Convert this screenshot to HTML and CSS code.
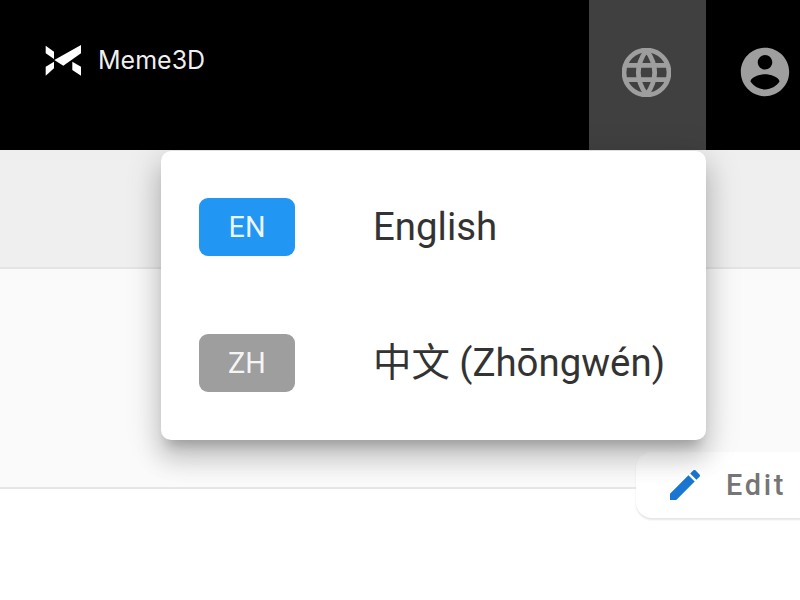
FILE: index.html
```html
<!DOCTYPE html>
<html lang="en">
<head>
<meta charset="utf-8">
<title>Meme3D</title>
<link rel="stylesheet" href="styles.css">
</head>
<body>
<div class="page">
  <header class="header">
    <div class="brand">
      <svg class="logo" viewBox="0 0 36 31" aria-hidden="true">
        <path d="M.7.7L9 6.7V14L.7 8.3Z"/><path d="M.7 30.7V21.7L9 16.7V23.3Z"/>
        <path d="M36 0V8.3L18.3 20.7L9.3 15Z"/><path d="M27.3 16.7L36 21.7V30.7L27.3 25Z"/>
      </svg>
      <span class="brand-name">Meme3D</span>
    </div>
    <div class="actions">
      <button class="action action-active" aria-label="Language">
        <svg class="globe" viewBox="0 0 48 48" aria-hidden="true">
          <circle cx="24" cy="24" r="22"/>
          <path d="M24 2Q8 24 24 46Q40 24 24 2Z"/>
          <path d="M4 17H44M4 31H44"/>
        </svg>
      </button>
      <button class="action" aria-label="Account">
        <svg class="account" viewBox="0 0 24 24" aria-hidden="true">
          <path d="M12 2C6.48 2 2 6.48 2 12s4.48 10 10 10 10-4.48 10-10S17.52 2 12 2zm0 3c1.66 0 3 1.34 3 3s-1.34 3-3 3-3-1.34-3-3 1.34-3 3-3zm0 14.2c-2.5 0-4.71-1.28-6-3.22.03-1.99 4-3.08 6-3.08 1.99 0 5.97 1.09 6 3.08-1.29 1.94-3.5 3.22-6 3.22z"/>
        </svg>
      </button>
    </div>
  </header>
  <div class="toolbar"></div>
  <section class="panel"></section>

  <button class="edit">
    <svg class="pencil" viewBox="0 0 24 24" aria-hidden="true">
      <path d="M3 17.25V21h3.75L17.81 9.94l-3.75-3.75L3 17.25zM20.71 7.04c.39-.39.39-1.02 0-1.41l-2.34-2.34c-.39-.39-1.02-.39-1.41 0l-1.83 1.83 3.75 3.75 1.83-1.83z"/>
    </svg>
    <span>Edit</span>
  </button>

  <ul class="menu">
    <li class="menu-item"><span class="chip chip-on">EN</span><span class="label">English</span></li>
    <li class="menu-item"><span class="chip chip-off">ZH</span><span class="label">中文 (Zhōngwén)</span></li>
  </ul>
</div>
</body>
</html>
```
FILE: styles.css
```css
* { box-sizing: border-box; }
html, body { margin: 0; padding: 0; background: #fff; }
.page {
  position: relative;
  width: 800px;
  height: 600px;
  overflow: hidden;
  font-family: Roboto, "Noto Sans CJK SC", sans-serif;
}
.header {
  display: flex;
  justify-content: space-between;
  height: 150px;
  background: #000;
}
.brand {
  display: flex;
  align-items: center;
  gap: 17px;
  padding: 0 0 29px 45px;
}
.logo { width: 36px; height: 31px; fill: #fff; }
.brand-name {
  font-family: Inter, sans-serif;
  font-size: 25px;
  font-weight: 400;
  color: rgba(255,255,255,.95);
  line-height: 1;
}
.actions { display: flex; flex: none; width: 211px; }
.action {
  flex: none;
  display: flex;
  align-items: center;
  justify-content: center;
  width: 117px;
  height: 150px;
  padding: 0 0 6px;
  border: 0;
  background: transparent;
}
.action-active { padding-right: 2px; background: #404040; }
.globe { width: 49px; height: 49px; fill: none; stroke: #9e9e9e; stroke-width: 4.6; }
.account { width: 58px; height: 58px; fill: #9e9e9e; }
.toolbar {
  height: 119px;
  background: #efefef;
  border-bottom: 2px solid #e4e4e4;
}
.panel {
  height: 220px;
  background: #fafafa;
  border-bottom: 2px solid #e6e6e6;
}
.menu {
  position: absolute;
  left: 161px;
  top: 151px;
  width: 545px;
  margin: 0;
  padding: 8px 0 9px;
  list-style: none;
  background: #fff;
  border-radius: 10px;
  box-shadow: 0 12px 12px -7px rgba(0,0,0,.2), 0 19px 24px 2px rgba(0,0,0,.14), 0 7px 34px 5px rgba(0,0,0,.12);
}
.menu-item {
  display: flex;
  align-items: center;
  height: 136px;
  padding-left: 38px;
}
.chip {
  flex: none;
  display: flex;
  align-items: center;
  justify-content: center;
  width: 96px;
  height: 58px;
  margin-right: 78px;
  border-radius: 9px;
  color: rgba(255,255,255,.92);
  font-size: 28.8px;
}
.chip-on { background: #2196f3; }
.chip-off { background: #9e9e9e; }
.label { font-size: 38.4px; line-height: 1.2; color: #333; white-space: nowrap; }
.edit {
  position: absolute;
  left: 636px;
  top: 452px;
  display: flex;
  align-items: center;
  gap: 21px;
  width: 200px;
  height: 66px;
  padding: 0 0 0 29px;
  border: 0;
  border-radius: 16px;
  background: #fff;
  box-shadow: 0 2px 2px rgba(0,0,0,.1);
  font: 500 28.8px Roboto, sans-serif;
  letter-spacing: 2.7px;
  color: #757575;
}
.pencil { flex: none; width: 40px; height: 40px; fill: #1976d2; }
```
